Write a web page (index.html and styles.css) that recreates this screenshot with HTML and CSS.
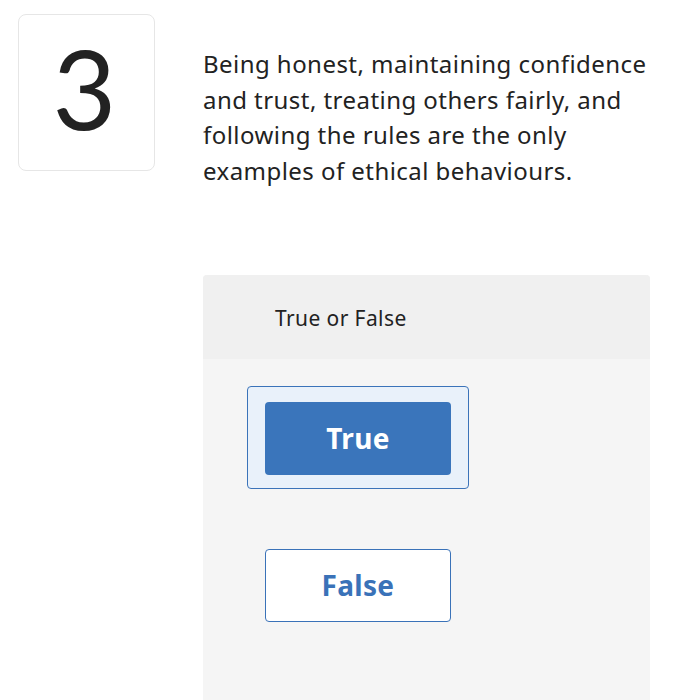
FILE: index.html
```html
<!DOCTYPE html>
<html>
<head>
<meta charset="utf-8">
<link rel="stylesheet" href="styles.css">
</head>
<body>
<div class="page">
  <div class="question">
    <div class="num">3</div>
    <p class="qtext">Being honest, maintaining confidence and trust, treating others fairly, and following the rules are the only examples of ethical behaviours.</p>
  </div>
  <div class="panel">
    <div class="panel-head">True or False</div>
    <div class="panel-body">
      <div class="opt selected"><div class="btn primary">True</div></div>
      <div class="opt"><div class="btn outline">False</div></div>
    </div>
  </div>
</div>
</body>
</html>
```
FILE: styles.css
```css
html, body {
  margin: 0;
  padding: 0;
  background: #fff;
  font-family: "Noto Sans", "Open Sans", sans-serif;
  color: #222;
}
.page {
  padding: 14px 0 0 18px;
}
.question {
  display: flex;
  align-items: flex-start;
  gap: 48px;
}
.num {
  box-sizing: border-box;
  width: 137px;
  height: 157px;
  flex: none;
  border: 1px solid #e6e6e6;
  border-radius: 8px;
  display: flex;
  align-items: center;
  justify-content: center;
  font-family: "Lato", sans-serif;
  font-size: 110px;
  font-weight: 400;
  color: #222;
  line-height: 1;
  padding: 0 4px 11px 0;
}
.qtext {
  margin: 32px 0 0 0;
  width: 452px;
  font-size: 24px;
  letter-spacing: 0.45px;
  line-height: 35.7px;
  color: #222;
}
.panel {
  margin: 86px 0 0 185px;
  width: 447px;
  height: 430px;
  border-radius: 4px 4px 0 0;
  overflow: hidden;
  background: #f5f5f5;
}
.panel-head {
  height: 84px;
  background: #f0f0f0;
  display: flex;
  align-items: center;
  padding: 2px 0 0 72px;
  box-sizing: border-box;
  font-size: 21px;
  letter-spacing: 0.4px;
  color: #222;
}
.panel-body {
  padding: 27px 0 0 44px;
  display: flex;
  flex-direction: column;
  align-items: flex-start;
  gap: 44px;
}
.opt {
  padding: 15px 17px 13px 17px;
  border: 1px solid transparent;
  border-radius: 4px;
}
.opt.selected {
  background: #e9f1fa;
  border-color: #3b73b9;
}
.btn {
  box-sizing: border-box;
  width: 186px;
  height: 73px;
  border-radius: 4px;
  display: flex;
  align-items: center;
  justify-content: center;
  font-size: 28px;
  font-weight: 700;
  letter-spacing: 0.3px;
}
.btn.primary {
  background: #3a75bb;
  color: #fff;
}
.btn.outline {
  background: #fff;
  color: #3a72b8;
  border: 1.5px solid #3a72b8;
}
```
